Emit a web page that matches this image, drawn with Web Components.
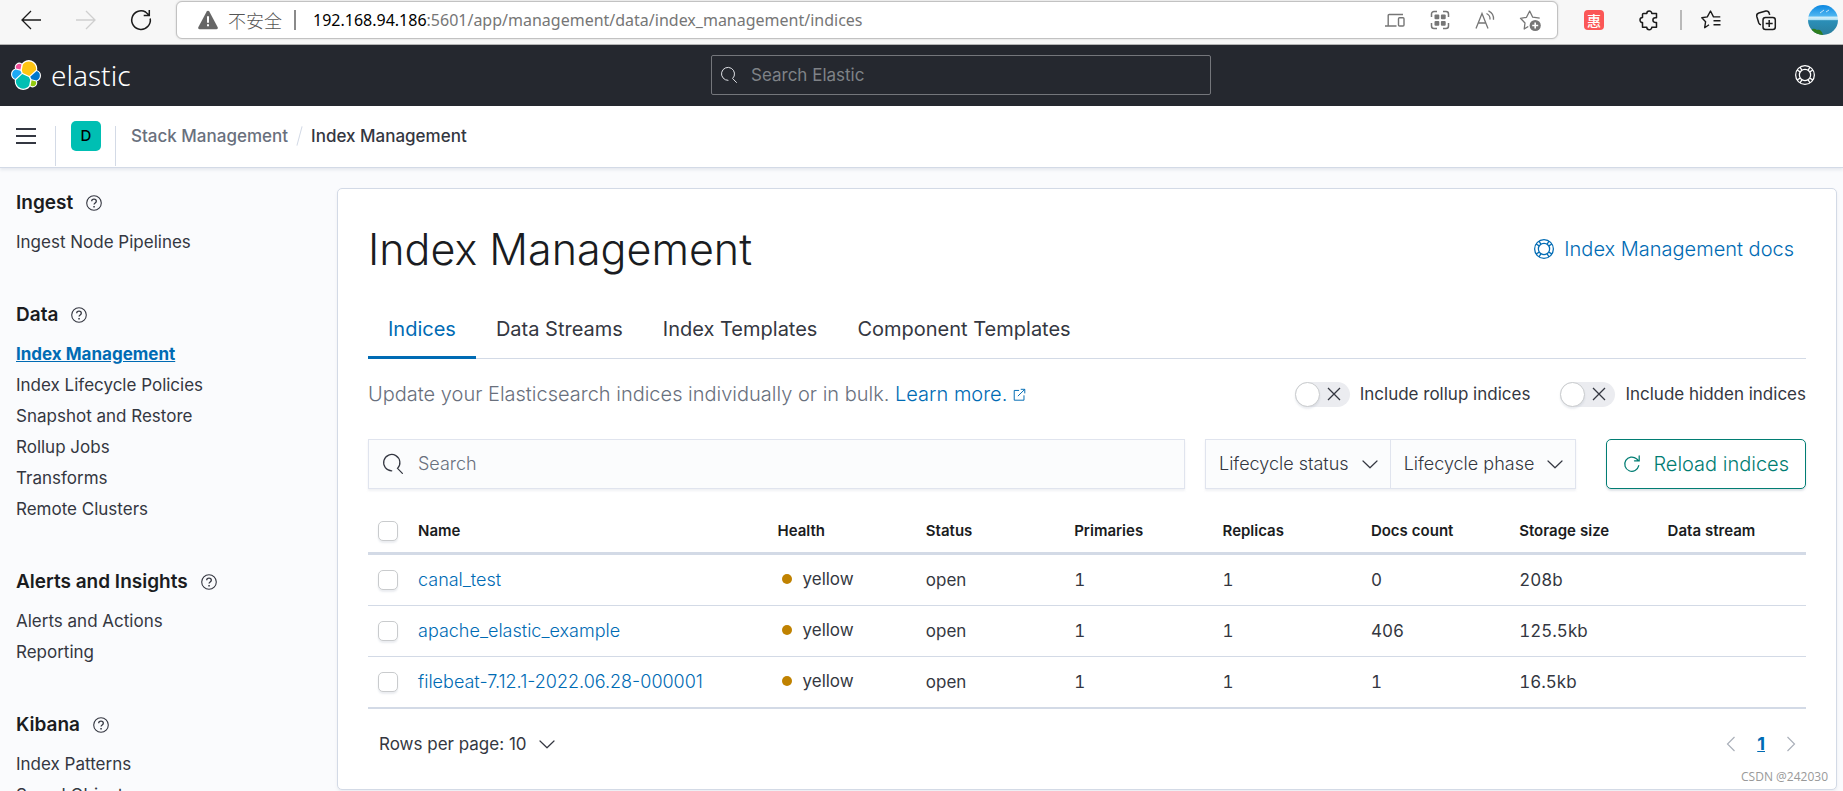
<!DOCTYPE html>
<html lang="en">
<head>
<meta charset="utf-8">
<title>Index Management - Elastic</title>
<style>
  html, body { margin: 0; height: 100%; }
  body {
    font-family: Inter, "Open Sans", sans-serif;
    font-size: 18px; line-height: 26px; font-weight: 300;
    color: #343741; background: #fafbfd; overflow: hidden;
    --blue: #006bb4; --line: #d3dae6; --ink: #1a1c21; --muted: #69707d; --teal: #017d73;
  }
</style>
</head>
<body>
<app-shell>
  <browser-bar slot="top"></browser-bar>
  <elastic-header slot="top"></elastic-header>
  <crumb-bar slot="top"></crumb-bar>
  <side-nav slot="side">
    <nav-group label="Ingest">
      <nav-item>Ingest Node Pipelines</nav-item>
    </nav-group>
    <nav-group label="Data">
      <nav-item current>Index Management</nav-item>
      <nav-item>Index Lifecycle Policies</nav-item>
      <nav-item>Snapshot and Restore</nav-item>
      <nav-item>Rollup Jobs</nav-item>
      <nav-item>Transforms</nav-item>
      <nav-item>Remote Clusters</nav-item>
    </nav-group>
    <nav-group label="Alerts and Insights">
      <nav-item>Alerts and Actions</nav-item>
      <nav-item>Reporting</nav-item>
    </nav-group>
    <nav-group label="Kibana">
      <nav-item>Index Patterns</nav-item>
      <nav-item>Saved Objects</nav-item>
    </nav-group>
  </side-nav>
  <page-panel>
    <page-title>Index Management</page-title>
    <tab-list></tab-list>
    <intro-row>
      <toggle-switch>Include rollup indices</toggle-switch>
      <toggle-switch>Include hidden indices</toggle-switch>
    </intro-row>
    <filter-bar></filter-bar>
    <index-table></index-table>
    <table-footer></table-footer>
  </page-panel>
</app-shell>

<script>
const S = 'fill="none" stroke="currentColor"';
const ICONS = {
  back: ['0 0 20 20', `<path ${S} stroke-width="1.3" d="M20 10H1M10 1 1 10l9 9"/>`],
  forward: ['0 0 20 20', `<path ${S} stroke-width="1.3" d="M0 10h19M10 1l9 9-9 9"/>`],
  reload: ['0 0 20 20', `<path ${S} stroke-width="1.5" d="M19.2 8.5A9.3 9.3 0 1 1 14.6 2l3.6 3.2M18.3 0v5.5h-5.6"/>`],
  warn: ['0 0 20 20', `<path fill="#666" d="M10 .8c.6 0 1 .3 1.300.8l8.400 15.700c.5 1-.2 1.900-1.200 1.900H1.500c-1 0-1.700-.9-1.200-1.900L8.700 1.600c.3-.5.7-.8 1.300-.8z"/><path fill="#fff" d="M9 6.300h2v6.500H9zM9 14.300h2v2H9z"/>`],
  devices: ['0 0 20 20', `<g ${S} stroke-width="1.4"><path d="M18 4.500H4.200a1 1 0 0 0-1 1v10M0 16h11.500"/><rect x="13.500" y="7.700" width="5.500" height="8.300" rx="1"/></g>`],
  grid: ['0 0 20 20', `<g ${S} stroke-width="1.500"><path d="M1.500 7V4a2.500 2.500 0 0 1 2.500-2.500h3M1.500 13v3A2.500 2.500 0 0 0 4 18.500h3M13 1.500h3A2.500 2.500 0 0 1 18.500 4v3M18.500 13v3a2.500 2.500 0 0 1-2.500 2.500h-3"/></g><g fill="currentColor"><rect x="4.500" y="4.500" width="4.800" height="4.800" rx="1"/><rect x="10.900" y="4.500" width="4.800" height="4.800" rx="1"/><rect x="4.500" y="10.900" width="4.800" height="4.800" rx="1"/><rect x="10.900" y="10.900" width="4.800" height="4.800" rx="1"/></g>`],
  read: ['0 0 20 20', `<g ${S} stroke-width="1.300"><path d="m1 18.500 6-15 6 15M3.200 13h7.600M11.500 3.500a6 6 0 0 1 3.500 6M13.500.8a9 9 0 0 1 5 9"/></g>`],
  staradd: ['0 0 20 20', `<path ${S} stroke-width="1.300" stroke-linejoin="round" d="M8.300 16.500 4.200 19l.8-6L.5 8.300l6-1L9.700 1l3 6.200 7 1"/><circle cx="15.200" cy="15.500" r="5.600" fill="currentColor"/><path stroke="#fff" stroke-width="1.600" d="M15.200 12.500v6M12.200 15.500h6"/>`],
  puzzle: ['0 0 20 20', `<path ${S} stroke-width="1.500" stroke-linejoin="round" d="M4.500 3.500h3.300a2.500 2.500 0 0 1 5 0h4.700v4.300h-1.300a2.300 2.300 0 0 0 0 4.600h1.300v4.800h-4.700a2.500 2.500 0 0 1-5 0H3.500v-4.600a2.500 2.500 0 0 1 0-5V4.500a1 1 0 0 1 1-1z"/>`],
  favs: ['0 0 20 20', `<g ${S} stroke-width="1.400" stroke-linejoin="round"><path d="m8 14.700-4.300 3 .9-6L.8 7.800l5.500-.9L9.500 1l3 5.900h6.800M12.500 10.800h7M12.500 14.800h7"/></g>`],
  collections: ['0 0 20 20', `<g ${S} stroke-width="1.500"><rect x="7" y="7.500" width="12.300" height="12" rx="2.500"/><path d="M13.200 10v7M9.700 13.500h7M5 14.800a3 3 0 0 1-2.200-1.900L.8 6.500a3 3 0 0 1 2-3.500l7-2a3 3 0 0 1 3.400 2.200l.5 1.700"/></g>`],
  lens: ['0 0 16 16', `<path ${S} stroke-linecap="round" d="M7 13.400a6.500 6.500 0 1 1 4.600-1.900l3.900 4"/>`],
  help: ['0 0 16 16', `<g ${S}><circle cx="8" cy="8" r="7.500"/><circle cx="8" cy="8" r="4.500"/><path d="m1.700 4 2.400 1.500M4 1.700l1.500 2.400M14.300 4l-2.400 1.500M12 1.700l-1.500 2.400M1.700 12l2.400-1.500M4 14.300l1.500-2.400M14.300 12l-2.400-1.500M12 14.300l-1.500-2.400"/></g>`],
  question: ['0 0 16 16', `<circle ${S} stroke-width="1.100" cx="8" cy="8" r="7.300"/><path ${S} stroke-width="1.300" d="M5.700 6.300C5.700 4.900 6.700 4.200 8 4.200s2.300.8 2.300 2c0 1.700-2.200 1.700-2.200 3.300"/><path fill="currentColor" d="M7.300 10.900h1.500v1.500H7.300z"/>`],
  menu: ['0 0 20 20', `<path stroke="currentColor" stroke-width="2" d="M0 3h20M0 10h20M0 17h20"/>`],
  popout: ['0 0 16 16', `<path ${S} stroke-width="1.200" d="M7.500 3H1.500v12h12V9M9.500 1.600h5v5M14.500 1.600 6 10"/>`],
  cross: ['0 0 14 14', `<path ${S} stroke-width="1.300" d="m1 1 12 12M13 1 1 13"/>`],
  down: ['0 0 16 16', `<path ${S} stroke-width="1.200" stroke-linecap="round" stroke-linejoin="round" d="m1 5 7 6.800L15 5"/>`],
  left: ['0 0 16 16', `<path ${S} stroke-width="1.200" d="M11.500 1 4.500 8l7 7"/>`],
  right: ['0 0 16 16', `<path ${S} stroke-width="1.200" d="m4.500 1 7 7-7 7"/>`],
  refresh: ['0 0 16 16', `<path ${S} stroke-width="1.100" stroke-linecap="round" d="M14 9.500A6.300 6.300 0 1 1 12 3.400c.5.400 1 .9 1.400 1.400M14.400.8v4.400h-4.200"/>`],
  elastic: ['0 0 32 32', `<path fill="#fff" d="M32 16.770a6.334 6.334 0 00-1.140-3.630 6.269 6.269 0 00-3.012-2.320 9.098 9.098 0 00.160-1.717 9.030 9.030 0 00-1.738-5.320 9.108 9.108 0 00-4.529-3.287 9.108 9.108 0 00-5.597.015 9.030 9.030 0 00-4.510 3.312 4.837 4.837 0 00-5.828.044 4.806 4.806 0 00-1.642 2.434 4.808 4.808 0 00.098 2.930 6.338 6.338 0 00-3.042 2.330A6.359 6.359 0 000 15.210a6.333 6.333 0 001.146 3.644 6.267 6.267 0 003.024 2.321 9.336 9.336 0 00-.160 1.717 9.030 9.030 0 001.738 5.313 9.110 9.110 0 004.525 3.283 9.110 9.110 0 005.592-.016 9.030 9.030 0 004.506-3.308 4.820 4.820 0 005.820-.043 4.823 4.823 0 001.641-2.426 4.823 4.823 0 00-.096-2.928 6.342 6.342 0 003.090-2.333A6.360 6.360 0 0032 16.770"/><path fill="#fec514" d="M12.580 13.787l7.002 3.211 7.066-6.213a7.854 7.854 0 00.152-1.557c0-4.272-3.456-7.740-7.716-7.740a7.712 7.712 0 00-6.384 3.386l-1.176 6.118z"/><path fill="#00bfb3" d="M5.333 21.214a7.930 7.930 0 00-.148 1.550c0 4.286 3.485 7.772 7.770 7.772a7.780 7.780 0 006.410-3.374l1.165-6.083-1.556-2.981-7.024-3.206z"/><path fill="#f04e98" d="M5.290 9.095l4.798 1.135 1.051-5.467A3.785 3.785 0 005.290 9.095"/><path fill="#1ba9f5" d="M4.872 10.214c-2.145.710-3.670 2.790-3.670 5.064a5.300 5.300 0 003.370 4.950l6.733-6.097-1.235-2.645z"/><path fill="#93c90e" d="M20.875 27.162a3.756 3.756 0 002.295.789 3.786 3.786 0 003.554-5.117l-4.794-1.122z"/><path fill="#07c" d="M21.848 20.563l5.280 1.236c2.146-.710 3.671-2.789 3.671-5.065a5.310 5.310 0 00-3.380-4.940l-6.905 6.043z"/>`],
  avatar: ['0 0 30 30', `<defs><clipPath id="c"><circle cx="15" cy="15" r="15"/></clipPath><linearGradient id="s" x2="0" y2="1"><stop offset="0" stop-color="#0a86e0"/><stop offset=".35" stop-color="#4cb4f0"/><stop offset=".42" stop-color="#d4f0fa"/><stop offset=".5" stop-color="#a6dcf2"/><stop offset=".52" stop-color="#2b8fb8"/><stop offset="1" stop-color="#2a7d9c"/></linearGradient></defs><g clip-path="url(#c)"><path fill="url(#s)" d="M0 0h30v30H0z"/><path stroke="#fff" stroke-width="1" opacity=".7" d="m12 8 4-3M18 7l3-2"/><path fill="#2e7d1e" d="M3 25c2-2 4-1 6 0 3-1 5 1 6 5H5z"/></g>`],
};

function define(name, css, html, setup) {
  const t = document.createElement('template');
  t.innerHTML = `<style>:host,*{box-sizing:border-box}${css}</style>${html}`;
  customElements.define(name, class extends HTMLElement {
    connectedCallback() {
      if (this.shadowRoot) return;
      this.attachShadow({ mode: 'open' }).append(t.content.cloneNode(true));
      if (setup) setup(this, this.shadowRoot);
    }
  });
}

define('ui-icon', `:host{display:inline-block;width:20px;height:20px;flex:none}svg{display:block;width:100%;height:100%;overflow:visible}`, '',
  (el, root) => {
    const [box, body] = ICONS[el.getAttribute('name')];
    root.innerHTML += `<svg viewBox="${box}" aria-hidden="true">${body}</svg>`;
  });

define('app-shell', `
  :host{display:flex;flex-direction:column;height:100vh;overflow:hidden}
  .body{flex:1;min-height:0;display:flex;align-items:flex-start}
  .main{flex:1;min-width:0;padding:20px 6px 0 0}
  .side{flex:none;width:337px}`,
  `<slot name="top"></slot><div class="body"><div class="side"><slot name="side"></slot></div><main class="main"><slot></slot></main></div>`);

define('browser-bar', `
  :host{display:flex;align-items:center;height:45px;padding:0 5px 5px 21px;background:#f7f7f7;border-bottom:1px solid #b4b4b4;font-family:"Noto Sans","Noto Sans CJK SC",sans-serif;font-weight:400;color:#1b1b1b}
  button{border:0;background:none;padding:0;margin:0;color:inherit;display:flex}
  .nav{display:flex;gap:35px;width:155px;flex:none}
  .nav [disabled]{color:#cfcfcf}
  .url{flex:1;min-width:0;height:38px;display:flex;align-items:center;background:#fff;border:1px solid #c2c2c2;border-radius:6px;padding:0 17px 0 21px;box-shadow:0 0 2px #ccc;color:#767676;font-size:16px;white-space:nowrap}
  .secure{font-family:"Noto Sans CJK SC",sans-serif;font-weight:300;font-size:18px;margin-left:10px;color:#555}
  .bar{width:2px;height:20px;background:#8a8a8a;margin:0 17px 0 12px}
  .addr{flex:1}
  b{font-weight:400;color:#000}
  .in{display:flex;gap:25px;align-items:center}
  .out{display:flex;align-items:center;flex:none;margin-left:26px}
  .out>*{margin-right:35px}
  .hui{width:20px;height:20px;border-radius:4px;background:#fb5757;color:#fff;font:500 14px/20px "Noto Sans CJK SC",sans-serif;justify-content:center}
  .sep{width:2px;height:20px;background:#b9b9b9;margin:0 19px 0 -14px}
  .out .last{margin:0}.last ui-icon{width:30px;height:30px}
  .out .col{margin-right:32px}`,
  `<div class="nav"><button aria-label="Back"><ui-icon name="back"></ui-icon></button><button disabled aria-label="Forward"><ui-icon name="forward"></ui-icon></button><button aria-label="Reload"><ui-icon name="reload"></ui-icon></button></div>
   <div class="url"><ui-icon name="warn"></ui-icon><span class="secure">不安全</span><span class="bar"></span><span class="addr"><b>192.168.94.186</b>:5601/app/management/data/index_management/indices</span>
   <div class="in"><button aria-label="Devices"><ui-icon name="devices"></ui-icon></button><button aria-label="QR code"><ui-icon name="grid"></ui-icon></button><button aria-label="Read aloud"><ui-icon name="read"></ui-icon></button><button aria-label="Add favourite"><ui-icon name="staradd"></ui-icon></button></div></div>
   <div class="out"><button class="hui">惠</button><button aria-label="Extensions"><ui-icon name="puzzle"></ui-icon></button><span class="sep"></span><button aria-label="Favourites"><ui-icon name="favs"></ui-icon></button><button class="col" aria-label="Collections"><ui-icon name="collections"></ui-icon></button><button class="last" aria-label="Profile"><ui-icon name="avatar"></ui-icon></button></div>`);

define('elastic-header', `
  :host{display:flex;align-items:center;justify-content:space-between;height:61px;padding-bottom:1px;background:#25282f;color:#fff}
  a{display:flex;align-items:center;gap:10px;width:147px;padding-left:11px;color:#fff;text-decoration:none;font:300 28px/40px "Noto Sans",sans-serif}
  a ui-icon{width:30px;height:30px}
  label{display:flex;align-items:center;gap:14px;width:500px;height:40px;border:1px solid #74767b;border-radius:2px;padding:0 9px;color:#dfe1e6}
  label ui-icon{width:16px;height:16px}
  input{flex:1;border:0;outline:0;background:none;font:inherit;font-size:17px;font-weight:400;color:#fff;padding:0}
  input::placeholder{color:#7f8287;opacity:1}
  .r{width:68px;padding-left:20px}
  button{border:0;background:none;padding:0;color:#fff;display:flex}`,
  `<a href="#home"><ui-icon name="elastic"></ui-icon><span>elastic</span></a>
   <label><ui-icon name="lens"></ui-icon><input type="search" placeholder="Search Elastic" aria-label="Search Elastic"></label>
   <div class="r"><button aria-label="Help"><ui-icon name="help"></ui-icon></button></div>`);

define('crumb-bar', `
  :host{display:flex;align-items:center;height:62px;padding:0 0 2px 16px;background:#fff;border-bottom:1px solid var(--line);box-shadow:0 2px 3px #98a2b333;font-size:17px;font-weight:500;position:relative}
  button{border:0;background:none;padding:0;display:flex;color:#343741;font:500 15px/30px Inter,sans-serif}
  .space{width:30px;height:30px;border-radius:5px;background:#00bfb3;color:#000;justify-content:center}
  i{width:1px;height:40px;background:var(--line);margin:20px 15px 0 14px;align-self:flex-start}
  i:first-of-type{margin-left:19px}
  a{color:var(--muted);text-decoration:none}
  .slash{width:1px;height:20px;background:var(--line);transform:rotate(15deg);margin:0 11px}
  .now{color:#343741}`,
  `<button aria-label="Menu"><ui-icon name="menu"></ui-icon></button><i></i><button class="space">D</button><i></i>
   <a href="#stack">Stack Management</a><span class="slash"></span><span class="now">Index Management</span>`);

define('side-nav', `:host{display:block;padding:20px 16px 0}`, `<nav aria-label="Management"><slot></slot></nav>`);
define('nav-group', `
  :host{display:block;margin-bottom:42px}
  h2{display:flex;align-items:center;gap:13px;margin:0 0 9px;font-size:19px;line-height:30px;font-weight:600;color:var(--ink)}
  ui-icon{width:16px;height:16px;color:#343741}`,
  `<h2><span></span><ui-icon name="question"></ui-icon></h2><slot></slot>`,
  (el, root) => root.querySelector('span').textContent = el.getAttribute('label'));
define('nav-item', `
  :host{display:block;font-size:17px;font-weight:400;line-height:31px}
  a{color:#343741;text-decoration:none}
  :host([current]) a{color:var(--blue);font-weight:700;text-decoration:underline}`,
  `<a href="#nav"><slot></slot></a>`);

define('page-panel', `:host{display:block;background:#fff;border:1px solid var(--line);border-radius:5px;padding:30px 30px 4px;box-shadow:0 2px 3px #98a2b326}`, `<slot></slot>`);

define('page-title', `
  :host{display:flex;align-items:center;justify-content:space-between;height:60px}
  h1{margin:0;font-weight:300;font-size:43px;line-height:60px;color:var(--ink)}
  a{display:flex;align-items:center;gap:10px;font-size:20px;color:var(--blue);text-decoration:none;padding-right:12px}`,
  `<h1><slot></slot></h1><a href="#docs"><ui-icon name="help"></ui-icon><span>Index Management docs</span></a>`);

define('tab-list', `
  :host{display:flex;border-bottom:1px solid var(--line);margin-top:22px}
  button{border:0;background:none;padding:0 20px;margin:0 0 -1px;height:58px;font:inherit;font-size:20px;font-weight:400;color:#343741;border-bottom:3px solid transparent}
  [aria-selected=true]{color:var(--blue);border-color:var(--blue)}`,
  `<button role="tab" aria-selected="true">Indices</button><button role="tab">Data Streams</button><button role="tab">Index Templates</button><button role="tab">Component Templates</button>`);

define('intro-row', `
  :host{display:flex;align-items:center;justify-content:space-between;height:30px;margin-top:20px}
  p{margin:0;font-size:20px;color:var(--muted)}
  a{color:var(--blue);text-decoration:none}
  a ui-icon{width:13px;height:13px;margin-left:6px}
  div{display:flex;gap:30px}`,
  `<p>Update your Elasticsearch indices individually or in bulk. <a href="#learn">Learn more.<ui-icon name="popout"></ui-icon></a></p><div><slot></slot></div>`);

define('toggle-switch', `
  :host{display:block;font-size:17px;font-weight:400}
  label{display:flex;align-items:center;gap:10px;position:relative}
  input{appearance:none;margin:0;width:55px;height:25px;border-radius:13px;background:#ebecf0}
  .knob{position:absolute;left:0;width:25px;height:25px;border:1px solid #c9cbcd;border-radius:50%;background:#fff;box-shadow:0 2px 2px #98a2b333}
  ui-icon{position:absolute;left:32px;width:14px;height:14px}`,
  `<label><input type="checkbox" role="switch"><span class="knob"></span><ui-icon name="cross"></ui-icon><span><slot></slot></span></label>`);

define('filter-bar', `
  :host{display:flex;margin-top:30px;height:50px}
  .search{flex:1;display:flex;align-items:center;gap:15px;padding:0 14px;background:#fbfcfd;border:1px solid #e0e4ee;box-shadow:0 2px 2px #98a2b326}
  input{flex:1;min-width:0;border:0;outline:0;background:none;font:inherit;padding:0;color:#343741}
  input::placeholder{color:var(--muted);opacity:1}
  .group{display:flex;margin:0 30px 0 20px;border:1px solid #e0e4ee;background:#fbfcfd;box-shadow:0 2px 2px #98a2b326}
  .group button{display:flex;align-items:center;gap:13px;border:0;background:none;font:inherit;color:#343741;padding:0 12px 0 13px}
  .group button+button{border-left:1px solid #e0e4ee}
  .group ui-icon{width:16px;height:16px}
  .go{display:flex;align-items:center;gap:12px;font:inherit;font-size:20px;color:var(--teal);background:#fff;border:1px solid var(--teal);border-radius:5px;padding:0 16px;box-shadow:0 2px 2px #98a2b34d}
  .go ui-icon{width:18px;height:18px}`,
  `<label class="search"><ui-icon name="lens"></ui-icon><input type="search" placeholder="Search" aria-label="Search"></label>
   <div class="group"><button>Lifecycle status<ui-icon name="down"></ui-icon></button><button>Lifecycle phase<ui-icon name="down"></ui-icon></button></div>
   <button class="go"><ui-icon name="refresh"></ui-icon>Reload indices</button>`);

const ROWS = [
  ['canal_test', 'yellow', 'open', '1', '1', '0', '208b', ''],
  ['apache_elastic_example', 'yellow', 'open', '1', '1', '406', '125.5kb', ''],
  ['filebeat-7.12.1-2022.06.28-000001', 'yellow', 'open', '1', '1', '1', '16.5kb', ''],
];
const HEADS = ['Name', 'Health', 'Status', 'Primaries', 'Replicas', 'Docs count', 'Storage size', 'Data stream'];
define('index-table', `
  :host{display:block;margin-top:20px}
  table{width:100%;table-layout:fixed;border-collapse:separate;border-spacing:0;border-bottom:1px solid var(--line);font-size:17px;font-weight:400;font-variant-numeric:tabular-nums}
  th,td{padding:0 10px;text-align:left;height:51px;border-bottom:1px solid var(--line);white-space:nowrap}
  th{height:46px;font-size:15px;line-height:20px;font-weight:600;color:var(--ink);border-bottom-width:3px}
  .c{width:40px}.n{width:25%}
  a{color:var(--blue);text-decoration:none;font-size:18px;font-weight:300;font-variant-numeric:normal}
  input{appearance:none;display:block;margin:0;width:20px;height:20px;border:1px solid #c9cbcd;border-radius:5px;background:#fff;box-shadow:0 2px 2px #98a2b333}
  .h{display:flex;align-items:center;gap:11px;padding:0 0 3px 4px}
  .h::before{content:"";width:10px;height:10px;border-radius:50%;background:#c08200}`,
  `<table><thead><tr><th class="c"><input type="checkbox" aria-label="Select all rows"></th>${HEADS.map((h, i) => `<th${i ? '' : ' class="n"'}>${h}</th>`).join('')}</tr></thead>
   <tbody>${ROWS.map(r => `<tr><td><input type="checkbox" aria-label="Select ${r[0]}"></td>${r.map((v, i) => `<td>${i === 0 ? `<a href="#index">${v}</a>` : i === 1 ? `<div class="h">${v}</div>` : v}</td>`).join('')}</tr>`).join('')}</tbody></table>`);

define('table-footer', `
  :host{display:block;margin-top:20px}
  .row{display:flex;align-items:center;justify-content:space-between;height:30px;padding:0 7px 0 11px}
  button{display:flex;align-items:center;gap:12px;border:0;background:none;font:inherit;font-size:17px;font-weight:400;color:#343741;padding:0}
  nav{display:flex;align-items:center;gap:18px;color:#abb0ba}
  nav button{color:inherit}
  ui-icon{width:16px;height:16px}
  a{color:var(--blue);font-weight:700}
  small{display:block;margin:10px -22px 0 0;text-align:right;font:400 12px/16px "Open Sans",sans-serif;color:#999}`,
  `<div class="row"><button>Rows per page: 10<ui-icon name="down"></ui-icon></button>
   <nav aria-label="Pages"><button aria-label="Previous page"><ui-icon name="left"></ui-icon></button><a href="#1">1</a><button aria-label="Next page"><ui-icon name="right"></ui-icon></button></nav></div>
   <small>CSDN @242030</small>`);
</script>
</body>
</html>
